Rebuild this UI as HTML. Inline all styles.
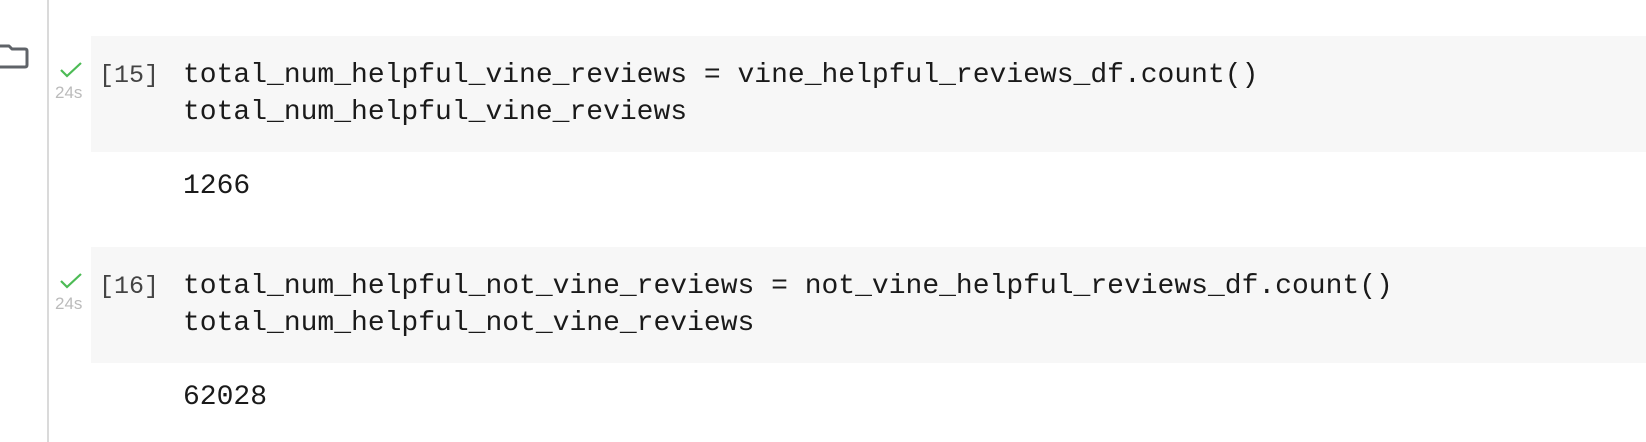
<!DOCTYPE html>
<html><head><style>
body{margin:0;width:1646px;height:442px;background:#fff;position:relative;overflow:hidden;font-family:"Liberation Mono",monospace;}
.vl{position:absolute;left:47px;top:0;width:2px;height:442px;background:#dadada;}
.cell{position:absolute;left:91px;width:1555px;height:116px;background:#f7f7f7;}
.t{position:absolute;font-size:28px;color:#1a1a1a;white-space:pre;line-height:1;}
.n{position:absolute;font-size:25px;color:#444;white-space:pre;line-height:1;-webkit-text-stroke:0;font-weight:300;}
.s{position:absolute;font-family:"Liberation Sans",sans-serif;font-size:17px;color:#bbb;}
</style></head><body>
<div class="vl"></div>
<svg style="position:absolute;left:0;top:44px" width="30" height="26" viewBox="0 0 30 26"><path d="M-4 2 H9 L12 5 H25 Q27 5 27 7 V21 Q27 23 25 23 H-4" fill="none" stroke="#5f6368" stroke-width="3" stroke-linejoin="round"/></svg>

<div class="cell" style="top:36px"></div>
<svg style="position:absolute;left:60px;top:62px" width="22" height="16" viewBox="0 0 22 16"><path d="M1 8 L7 14 L21 1" fill="none" stroke="#4cbb55" stroke-width="2.2"/></svg>
<div class="s" style="left:55px;top:83px">24s</div>
<div class="n" style="left:99px;top:63px">[15]</div>
<div class="t" style="left:183px;top:62px">total_num_helpful_vine_reviews = vine_helpful_reviews_df.count()</div>
<div class="t" style="left:183px;top:99px">total_num_helpful_vine_reviews</div>
<div class="t" style="left:183px;top:173px">1266</div>

<div class="cell" style="top:247px"></div>
<svg style="position:absolute;left:60px;top:273px" width="22" height="16" viewBox="0 0 22 16"><path d="M1 8 L7 14 L21 1" fill="none" stroke="#4cbb55" stroke-width="2.2"/></svg>
<div class="s" style="left:55px;top:294px">24s</div>
<div class="n" style="left:99px;top:274px">[16]</div>
<div class="t" style="left:183px;top:273px">total_num_helpful_not_vine_reviews = not_vine_helpful_reviews_df.count()</div>
<div class="t" style="left:183px;top:310px">total_num_helpful_not_vine_reviews</div>
<div class="t" style="left:183px;top:384px">62028</div>
</body></html>
